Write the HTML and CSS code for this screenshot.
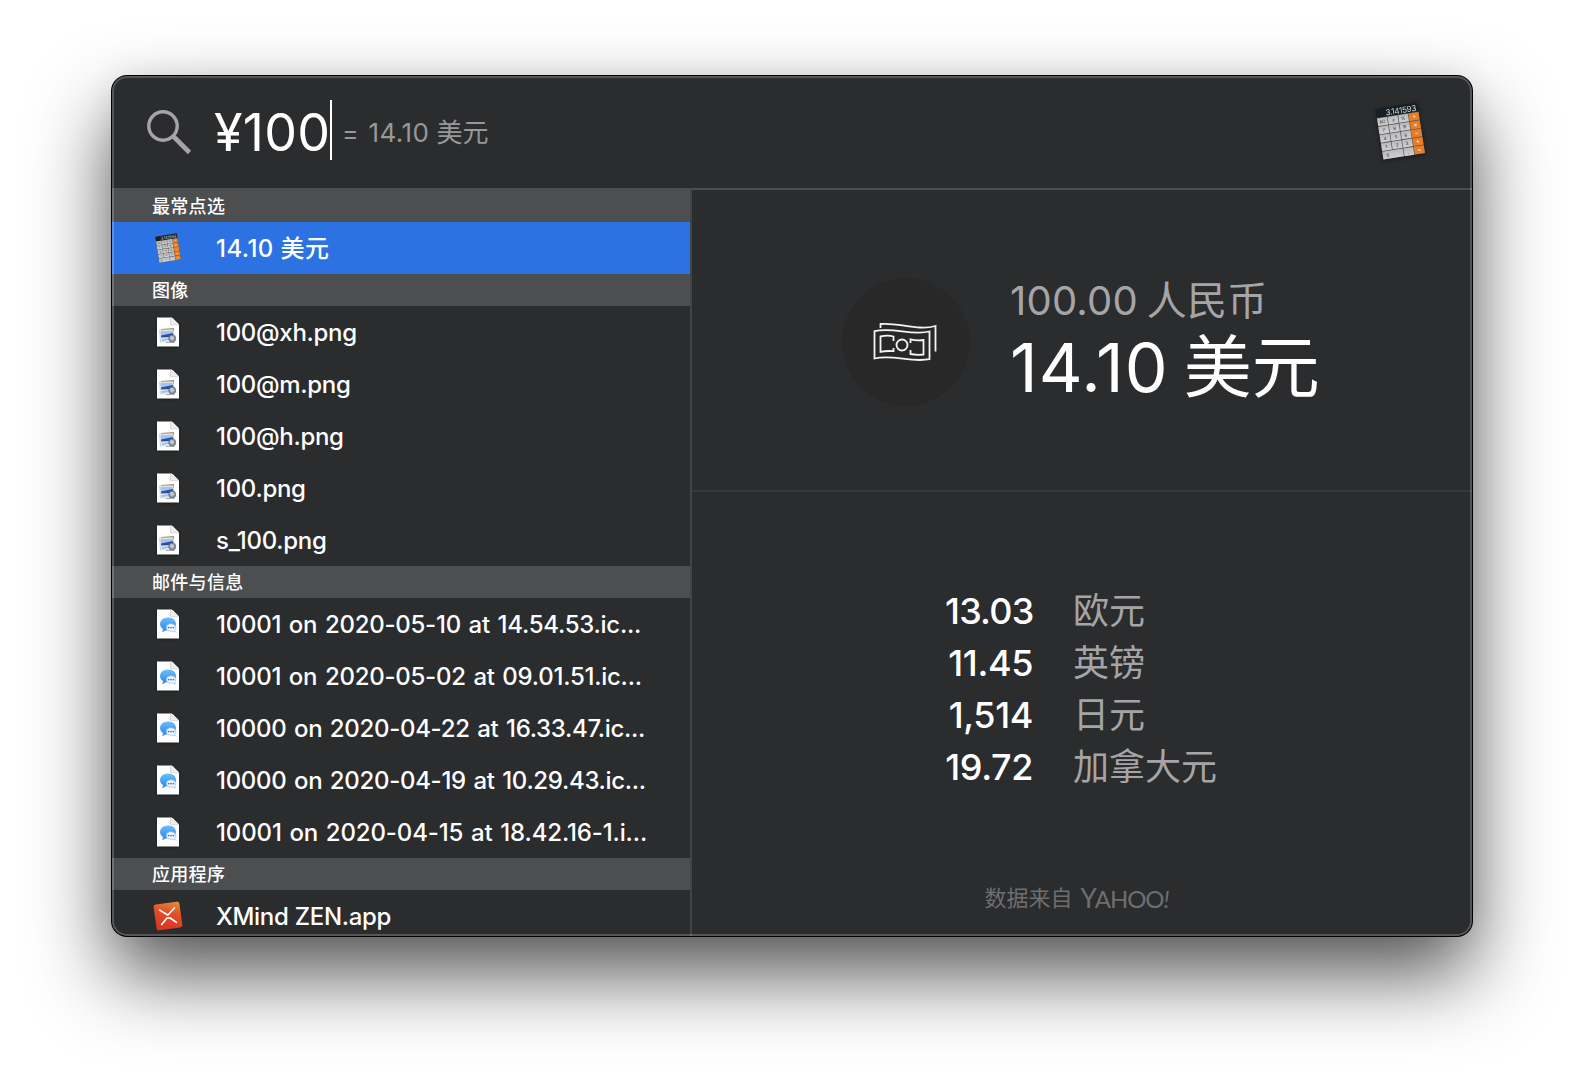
FILE: index.html
```html
<!DOCTYPE html>
<html lang="zh-CN">
<head>
<meta charset="utf-8">
<title>Spotlight</title>
<link rel="stylesheet" href="styles.css">
</head>
<body>
<svg class="defs" aria-hidden="true">
  <defs>
    <linearGradient id="blueBubble" x1="0" y1="0" x2="0" y2="1"><stop offset="0" stop-color="#6cc0fb"/><stop offset="1" stop-color="#2583ee"/></linearGradient>
    <linearGradient id="zen" x1="0.8" y1="0" x2="0.4" y2="1"><stop offset="0" stop-color="#e28a3c"/><stop offset=".4" stop-color="#df5128"/><stop offset="1" stop-color="#dc3522"/></linearGradient>
    <linearGradient id="keys" x1="0" y1="0" x2="0" y2="1"><stop offset="0" stop-color="#b9babc"/><stop offset="1" stop-color="#cfcfd0"/></linearGradient>
    <symbol id="page" viewBox="0 0 24 30">
      <path d="M1 .5H14.500Q16 .5 17 1.500L22 6.500Q23 7.500 23 9V29.500H1Z" fill="#fff"/>
      <path d="M14.500 .5Q16 .5 17 1.500L22 6.500Q23 7.500 23 9Q22.500 7.800 20.500 7.800H14.500Z" fill="#ededed"/>
      <path d="M14.500 1V7.800H21" fill="none" stroke="#cfcfcf" stroke-width=".7"/>
    </symbol>
    <symbol id="image-file" viewBox="0 0 24 30">
      <use href="#page" width="24" height="30"/>
      <path d="M5 12L18 11V14L5 20Z" fill="#b58a48"/>
      <path d="M3.500 13L17 12.200 18.500 23 4.500 25Z" fill="#e9eef4" stroke="#aab3bd" stroke-width=".5"/>
      <path d="M4.500 14.200L16.500 13.500 17 17 5 19Z" fill="#a3c4ee"/>
      <path d="M5 18.500L17 16 17.500 20 5.200 20.500Z" fill="#2950a0"/>
      <path d="M5.500 22L16 20.800 16.500 22 6 24Z" fill="#9ac2e6"/>
      <circle cx="16.200" cy="21.500" r="3.500" fill="#8c969e" stroke="#6b7074" stroke-width=".9"/>
      <circle cx="16" cy="21" r="2" fill="#c5cdd3"/>
      <path d="M10 25.500H18.500" stroke="#aaa" stroke-width="1"/>
    </symbol>
    <symbol id="chat-file" viewBox="0 0 24 30">
      <use href="#page" width="24" height="30"/>
      <path d="M12.200 8.500C7.600 8.500 4 11.300 4 15c0 2.300 1.300 4 3.200 5.100 0 1-.5 1.900-1.300 2.600 1.700 0 3-.6 4-1.500 5.800.8 10.100-2 10.100-6.200 0-3.700-3.300-6.500-7.800-6.500Z" fill="url(#blueBubble)"/>
      <path d="M15 14.800c2.800 0 4.900 1.600 4.900 3.900 0 1.200-.5 2-1.300 2.700l.8 1.500c-1 0-1.900-.3-2.500-.8-3.800.6-6.700-.9-6.700-3.400 0-2.300 2-3.900 4.800-3.900Z" fill="#eef6ff" stroke="#7db3e8" stroke-width=".6"/>
      <g fill="#3c76bb"><circle cx="12.600" cy="18.600" r=".9"/><circle cx="15" cy="18.600" r=".9"/><circle cx="17.400" cy="18.600" r=".9"/></g>
    </symbol>
    <symbol id="calculator" viewBox="0 0 52 60">
      <g transform="translate(.5 7.200) rotate(-9)">
        <rect x="0" y="0" width="42" height="51" fill="#151f24"/>
        <rect x="0" y="9" width="42" height="42" fill="#55585a"/>
        <g fill="url(#keys)">
          <rect x="0" y="9.500" width="10" height="7.600"/><rect x="10.700" y="9.500" width="10" height="7.600"/><rect x="21.400" y="9.500" width="9.800" height="7.600"/>
          <rect x="0" y="17.900" width="10" height="7.600"/><rect x="10.700" y="17.900" width="10" height="7.600"/><rect x="21.400" y="17.900" width="9.800" height="7.600"/>
          <rect x="0" y="26.300" width="10" height="7.600"/><rect x="10.700" y="26.300" width="10" height="7.600"/><rect x="21.400" y="26.300" width="9.800" height="7.600"/>
          <rect x="0" y="34.700" width="10" height="7.600"/><rect x="10.700" y="34.700" width="10" height="7.600"/><rect x="21.400" y="34.700" width="9.800" height="7.600"/>
          <rect x="0" y="43.100" width="20.700" height="7.900"/><rect x="21.400" y="43.100" width="9.800" height="7.900"/>
        </g>
        <g fill="#e87d28">
          <rect x="31.800" y="9.500" width="10.200" height="7.700"/><rect x="31.800" y="17.900" width="10.200" height="7.700"/><rect x="31.800" y="26.300" width="10.200" height="7.700"/><rect x="31.800" y="34.700" width="10.200" height="7.700"/><rect x="31.800" y="43.100" width="10.200" height="7.900"/>
        </g>
        <text class="calc-display" x="40.500" y="7.900" text-anchor="end" textLength="31">3.141593</text>
        <g class="calc-key">
          <text x="5" y="15">AC</text><text x="16" y="15">±</text><text x="26" y="15">%</text>
          <text x="5" y="23.500">7</text><text x="16" y="23.500">8</text><text x="26" y="23.500">9</text>
          <text x="5" y="32">4</text><text x="16" y="32">5</text><text x="26" y="32">6</text>
          <text x="5" y="40.300">1</text><text x="16" y="40.300">2</text><text x="26" y="40.300">3</text>
          <text x="5" y="49">0</text><text x="26" y="49">.</text>
        </g>
        <g class="calc-op">
          <text x="37" y="15">÷</text><text x="37" y="23.500">×</text><text x="37" y="32">−</text><text x="37" y="40.300">+</text><text x="37" y="49">=</text>
        </g>
      </g>
    </symbol>
  </defs>
</svg>

<main class="window">
  <header class="search">
    <svg class="search-icon" viewBox="0 0 46 46"><circle cx="17" cy="17" r="14.200" fill="none" stroke="#a5a5a7" stroke-width="3.400"/><path d="M27 27L43.500 43.500" stroke="#a5a5a7" stroke-width="4.600"/></svg>
    <span class="query">¥100</span>
    <span class="caret"></span>
    <span class="answer"><span class="equals">=</span><span><span class="num">14.10</span> 美元</span></span>
    <svg class="search-app"><use href="#calculator"/></svg>
  </header>
  <div class="body">
    <nav class="results">
      <h2 class="group first">最常点选</h2>
      <div class="row selected"><svg class="calc-small"><use href="#calculator"/></svg><span class="name hit">14.10 美元</span></div>
      <h2 class="group">图像</h2>
      <div class="row"><svg class="file"><use href="#image-file"/></svg><span class="name">100@xh.png</span></div>
      <div class="row"><svg class="file"><use href="#image-file"/></svg><span class="name">100@m.png</span></div>
      <div class="row"><svg class="file"><use href="#image-file"/></svg><span class="name">100@h.png</span></div>
      <div class="row"><svg class="file"><use href="#image-file"/></svg><span class="name">100.png</span></div>
      <div class="row"><svg class="file"><use href="#image-file"/></svg><span class="name">s_100.png</span></div>
      <h2 class="group">邮件与信息</h2>
      <div class="row"><svg class="file"><use href="#chat-file"/></svg><span class="name chat">10001 on 2020-05-10 at 14.54.53.ic...</span></div>
      <div class="row"><svg class="file"><use href="#chat-file"/></svg><span class="name chat">10001 on 2020-05-02 at 09.01.51.ic...</span></div>
      <div class="row"><svg class="file"><use href="#chat-file"/></svg><span class="name chat tight">10000 on 2020-04-22 at 16.33.47.ic...</span></div>
      <div class="row"><svg class="file"><use href="#chat-file"/></svg><span class="name chat tight">10000 on 2020-04-19 at 10.29.43.ic...</span></div>
      <div class="row"><svg class="file"><use href="#chat-file"/></svg><span class="name chat loose">10001 on 2020-04-15 at 18.42.16-1.i...</span></div>
      <h2 class="group">应用程序</h2>
      <div class="row"><svg class="zen" viewBox="0 0 30 30"><g transform="rotate(-8 15 15)"><rect x="2" y="2" width="26" height="26" rx="2.500" fill="url(#zen)"/><path d="M7.500 8L15 14L22.500 8M7.500 22.500L13.500 17H16.500L22.500 22.500" fill="none" stroke="#fff" stroke-width="1.700" stroke-linecap="round" stroke-linejoin="round"/></g></svg><span class="name">XMind ZEN.app</span></div>
    </nav>
    <section class="preview">
      <div class="conversion">
        <div class="badge"><svg viewBox="0 0 64 40"><g fill="none" stroke="#f4f4f4" stroke-width="1.800"><path d="M1.500 9.200C20 4.500 38 14 56.500 9.500V37.200C38 41 20 32 1.500 36.500Z"/><path d="M7.500 6V2C25 .2 45 9 62.500 4V29.500"/><path d="M20.500 19V14.500C16 13.200 12 13.500 7.500 14.500V29.800C12 28.800 16 28.800 20.500 29.200V26"/><circle cx="29" cy="23" r="5.500"/><path d="M37.500 21V17.300C42 18.500 46 18.500 50.500 18V32.500C46 33 42 33 37.500 32V28"/></g></svg></div>
        <div class="amounts">
          <div class="from">100.00 人民币</div>
          <div class="to"><span class="num">14.10</span> 美元</div>
        </div>
      </div>
      <div class="others">
        <dl class="rates">
          <dt class="wide">13.03</dt><dd>欧元</dd>
          <dt>11.45</dt><dd>英镑</dd>
          <dt>1,514</dt><dd>日元</dd>
          <dt>19.72</dt><dd>加拿大元</dd>
        </dl>
        <footer class="source"><span>数据来自</span><span class="yahoo"><span class="y">Y</span>AHOO<i>!</i></span></footer>
      </div>
    </section>
  </div>
</main>
</body>
</html>
```
FILE: styles.css
```css
* { box-sizing: border-box; }
body {
  margin: 0;
  height: 1084px;
  padding: 76px 112px 0;
  background: #fff;
  color: #fff;
  font-family: Inter, "Noto Sans CJK SC", sans-serif;
  overflow: hidden;
}
.defs { position: absolute; width: 0; height: 0; }

.window {
  position: relative;
  width: 1360px;
  height: 860px;
  border-radius: 15px;
  background: #2b2c2e;
  display: flex;
  flex-direction: column;
  box-shadow: 0 0 0 1px #000, 0 38px 80px rgba(0, 0, 0, .68), 0 0 30px rgba(0, 0, 0, .06);
}
/* translucent rim drawn over the content */
.window::after {
  content: "";
  position: absolute;
  inset: 0;
  border: 2px solid rgba(255, 255, 255, .2);
  border-radius: 15px;
}

.search { height: 112px; flex: none; display: flex; align-items: center; padding: 0 45px 0 34px; }
.search-icon { width: 46px; height: 46px; flex: none; }
.query { margin: 1px 0 0 22px; font-size: 52px; line-height: 60px; letter-spacing: .2px; width: 116px; white-space: nowrap; }
.caret { width: 2px; height: 60px; background: #fff; margin-top: -4px; }
.answer { margin: 2px 0 0 10px; display: flex; gap: 10px; color: #98989a; font-size: 26px; line-height: 32px; white-space: nowrap; }
.answer .num { letter-spacing: .4px; }
.equals { font-size: 25px; }
.search-app { width: 52px; height: 60px; margin: 0 0 0 auto; filter: drop-shadow(0 1px 2px rgba(0, 0, 0, .5)); }
.calc-display { font: 8.200px Inter, sans-serif; fill: #cdd4d6; }
.calc-key { font: 4.500px Inter, sans-serif; fill: #333; text-anchor: middle; }
.calc-op { font: 6px Inter, sans-serif; fill: #fff; text-anchor: middle; }

.body { flex: 1; min-height: 0; display: flex; border-radius: 0 0 15px 15px; overflow: hidden; }
.results { width: 578px; flex: none; overflow: hidden; }
.group {
  margin: 0;
  height: 32px;
  padding: 1px 0 0 40px;
  background: #4d4e50;
  font-size: 18px;
  line-height: 32px;
  font-weight: 500;
  letter-spacing: .3px;
}
.group.first { height: 34px; padding-top: 3px; }
.row { height: 52px; display: flex; align-items: center; padding-left: 40px; }
.row.selected { background: #2d72e3; }
.file { width: 30px; height: 30px; flex: none; margin: -1px -1px 0 1px; filter: drop-shadow(0 1px 1px rgba(0, 0, 0, .4)); }
.calc-small { width: 27px; height: 31px; flex: none; margin: 0 0 0 3px; }
.zen { width: 30px; height: 30px; flex: none; margin: -1px -1px 0 1px; }
.name { margin: 2px 0 0 34px; font-size: 24px; line-height: 30px; font-weight: 500; letter-spacing: -.3px; white-space: nowrap; }
.name.hit { letter-spacing: .45px; }
.name.chat { letter-spacing: -.25px; word-spacing: 1.5px; }
.name.chat.tight { letter-spacing: -.31px; }
.name.chat.loose { letter-spacing: -.14px; }

.preview { flex: 1; border-left: 2px solid #434446; border-top: 2px solid #4d4e50; display: flex; flex-direction: column; }
.conversion { height: 302px; flex: none; padding-right: 4px; border-bottom: 2px solid #38393b; display: flex; align-items: center; justify-content: center; gap: 40px; }
.badge { width: 128px; height: 128px; border-radius: 50%; background: #282828; display: grid; place-items: center; margin-top: 4px; }
.badge svg { width: 64px; height: 40px; margin-right: 2px; }
.amounts { width: 308px; margin-top: 5px; white-space: nowrap; }
.from { color: #a5a5a7; font-size: 40px; line-height: 48px; letter-spacing: .2px; word-spacing: -2.500px; }
.to { font-size: 68px; line-height: 84px; word-spacing: -4px; }
.to .num { letter-spacing: 1px; }

.others { flex: 1; display: flex; flex-direction: column; align-items: center; }
.rates { margin: 93px 0 0; display: grid; grid-template-columns: 88px 146px; column-gap: 40px; grid-auto-rows: 52px; line-height: 52px; font-size: 36px; white-space: nowrap; }
.rates dt { text-align: right; font-weight: 500; letter-spacing: -.4px; }
.rates dt.wide { letter-spacing: -.8px; }
.rates dd { margin: 0; color: #a5a5a7; }
.source { margin: 90px 0 0 -11px; display: flex; gap: 8px; color: #6d6e70; font-size: 22px; line-height: 30px; }
.yahoo { font-family: Lato, sans-serif; font-weight: 400; font-size: 24px; letter-spacing: -1.100px; }
.yahoo .y { font-size: 26px; letter-spacing: -2px; }
```
